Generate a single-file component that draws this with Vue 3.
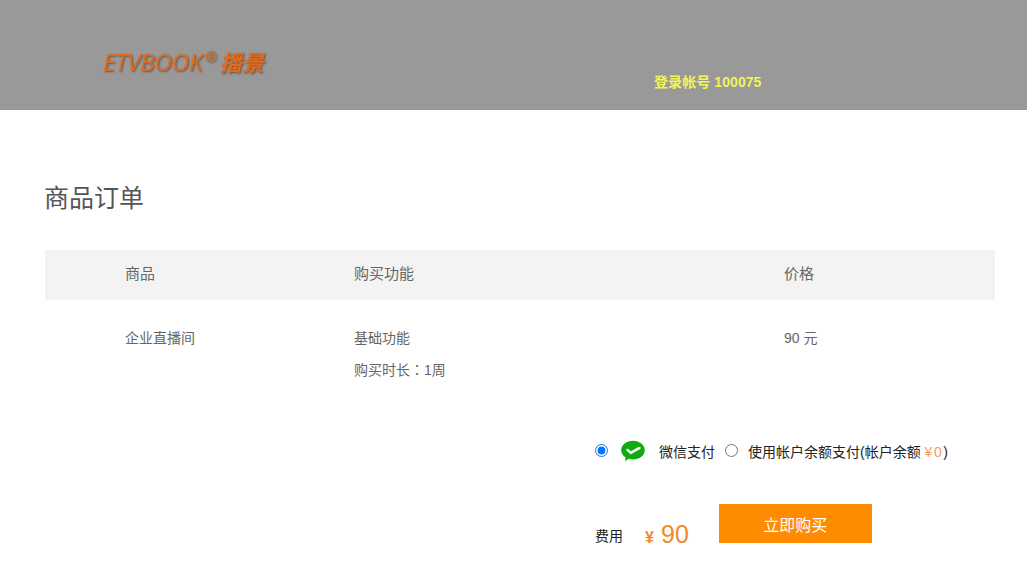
<template>
  <div class="page">
    <header class="top">
      <div class="logo">
        <span class="en">ETVBOOK</span><sup class="reg">®</sup><span class="cn">播景</span>
      </div>
      <div class="account">登录帐号 100075</div>
    </header>
    <main class="main">
      <h1 class="title">商品订单</h1>
      <div class="row head">
        <div>商品</div>
        <div>购买功能</div>
        <div>价格</div>
      </div>
      <div class="row body">
        <div>企业直播间</div>
        <div class="stack">
          <div>基础功能</div>
          <div>购买时长<span class="colon">：</span>1周</div>
        </div>
        <div>90 元</div>
      </div>
      <div class="pay">
        <div class="methods">
          <input class="radio" type="radio" name="pay" checked />
          <svg class="wx" viewBox="0 0 24 24" width="24" height="24" aria-hidden="true">
            <path fill="#10a90f" d="M12 1.800C5.400 1.800 0.200 6 0.200 11.200c0 2.900 1.700 5.400 4.300 7.100l-.5 4 3.600-2.500c1.400.4 2.900.6 4.400.6 6.600 0 11.800-4.100 11.800-9.200S18.600 1.800 12 1.800z"/>
            <path fill="none" stroke="#fff" stroke-width="2.400" stroke-linecap="round" stroke-linejoin="round" d="M6.500 10.900l3.300 3 8.700-5"/>
          </svg>
          <span class="m1">微信支付</span>
          <input class="radio r2" type="radio" name="pay" />
          <span class="m2">使用帐户余额支付(帐户余额 <em>¥0</em>)</span>
        </div>
        <div class="checkout">
          <span class="fee">费用</span>
          <span class="yen">¥</span>
          <span class="amount">90</span>
          <button class="buy" type="button">立即购买</button>
        </div>
      </div>
    </main>
  </div>
</template>

<script setup>
</script>

<style>
html, body { margin: 0; background: #fff; }
</style>

<style scoped>
.page {
  font-family: "Liberation Sans", "Noto Sans CJK SC", sans-serif;
  color: #666;
  font-size: 14px;
  height: 569px;
  overflow: hidden;
}
.top {
  height: 110px;
  background: #999;
  display: flex;
  box-sizing: border-box;
  padding-left: 103px;
}
.logo {
  width: 551px;
  padding-top: 47px;
  box-sizing: border-box;
  height: 80px;
  color: #e4691a;
  font-family: "Open Sans", "Noto Sans CJK SC", sans-serif;
  font-style: italic;
  font-size: 24px;
  line-height: 30px;
  text-shadow: 1px 1px 2px #5f5448;
  white-space: nowrap;
  filter: blur(0.4px);
}
.en { letter-spacing: -0.1px; }
.reg { font-size: 14px; line-height: 0; vertical-align: 9px; margin: 0 3px 0 3px; font-style: normal; font-weight: 700; }
.cn { font-weight: 700; font-size: 22px; }
.account {
  color: #f3f35a;
  font-weight: 700;
  font-size: 14px;
  padding-top: 74px;
  line-height: 16px;
  letter-spacing: 0.08px;
}
.main { padding: 0 32px 0 45px; }
.title {
  margin: 0 0 0 -1px;
  padding-top: 71px;
  padding-bottom: 1px;
  font-size: 25px;
  font-weight: 400;
  line-height: 34px;
  color: #555;
}
.row {
  display: grid;
  grid-template-columns: 229px 430px 1fr;
  padding-left: 80px;
}
.head {
  margin-top: 34px;
  height: 50px;
  width: 950px;
  box-sizing: border-box;
  background: #f3f3f3;
  align-items: center;
  font-size: 15px;
  padding-bottom: 6px;
}
.body { padding-top: 28px; line-height: 20px; width: 950px; box-sizing: border-box; font-size: 14px; }
.stack { display: flex; flex-direction: column; gap: 12px; }
.colon { font-family: "Noto Sans CJK TC", sans-serif; line-height: 0; }
.pay { padding-left: 550px; }
.methods {
  display: flex;
  align-items: center;
  margin-top: 59px;
  height: 24px;
  color: #222;
  font-size: 14px;
  white-space: nowrap;
}
.radio { margin: 0; width: 13px; height: 13px; flex: none; position: relative; top: -1px; }
.wx { margin-left: 13px; }
.m1 { margin-left: 14px; }
.r2 { margin-left: 10px; }
.m2 { margin-left: 10px; }
.m2 em { font-style: normal; color: #f79a63; letter-spacing: 1.6px; }
.checkout {
  display: flex;
  align-items: flex-end;
  margin-top: 41px;
  color: #222;
}
.fee { font-size: 14px; line-height: 20px; margin-bottom: -3px; }
.yen { color: #ee8a2a; font-size: 16px; font-weight: 700; margin-left: 22px; line-height: 20px; margin-bottom: -5px; width: 10px; }
.amount { color: #ee8a2a; font-size: 25px; line-height: 30px; margin-left: 6px; margin-bottom: -6px; }
.buy {
  margin-left: 30px;
  width: 153px;
  height: 39px;
  border: 0;
  padding: 0;
  background: #ff8c00;
  color: #fff;
  font: inherit;
  font-size: 16px;
}
</style>
